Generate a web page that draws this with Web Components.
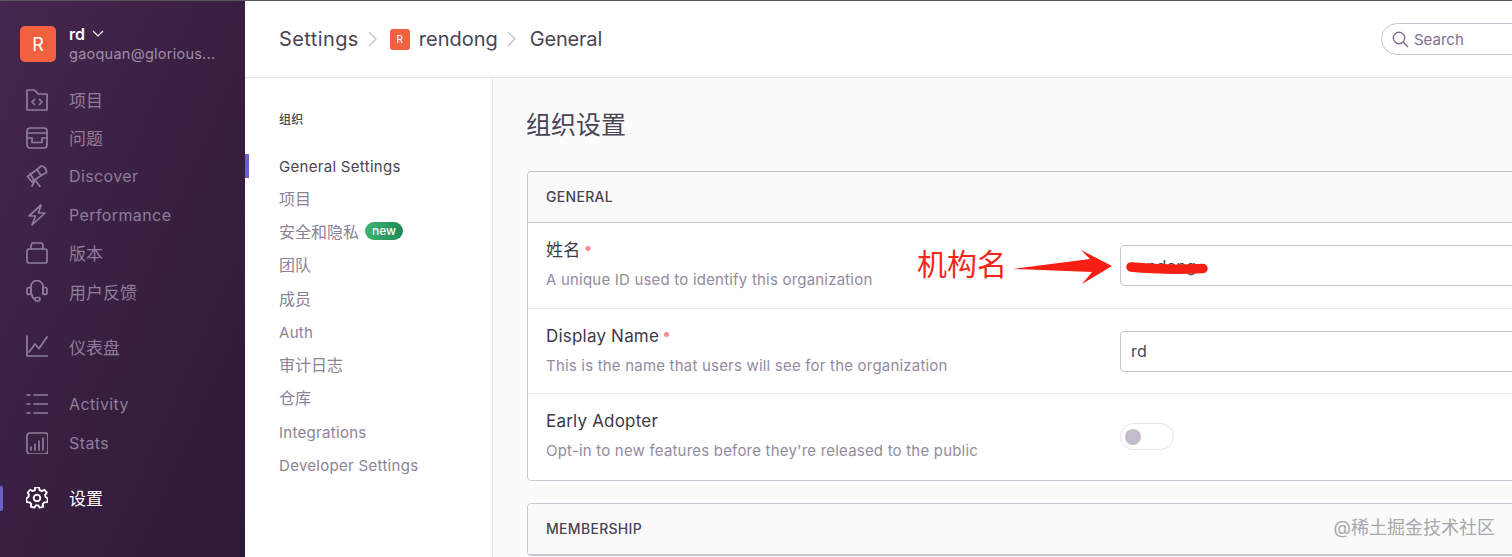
<!DOCTYPE html>
<html lang="zh">
<head>
<meta charset="utf-8">
<title>组织设置</title>
<style>
  html, body { margin: 0; height: 100%; overflow: hidden; background: #fff; }
  body { font-family: Inter, "Noto Sans CJK SC", sans-serif; }
</style>
</head>
<body>
<app-shell>
  <side-bar slot="side">
    <nav-item label="项目" icon="projects"></nav-item>
    <nav-item label="问题" icon="issues"></nav-item>
    <nav-item label="Discover" icon="discover"></nav-item>
    <nav-item label="Performance" icon="performance"></nav-item>
    <nav-item label="版本" icon="releases"></nav-item>
    <nav-item label="用户反馈" icon="feedback"></nav-item>
    <nav-gap size="17"></nav-gap>
    <nav-item label="仪表盘" icon="dashboards"></nav-item>
    <nav-gap size="19.500"></nav-gap>
    <nav-item label="Activity" icon="activity"></nav-item>
    <nav-item label="Stats" icon="stats"></nav-item>
    <nav-gap size="17"></nav-gap>
    <nav-item label="设置" icon="settings" active></nav-item>
  </side-bar>
  <top-bar slot="top"></top-bar>
  <settings-nav slot="nav"></settings-nav>
  <main-content slot="main">
    <form-panel title="General">
      <form-field label="姓名" help="A unique ID used to identify this organization" required value="rendong"></form-field>
      <form-field label="Display Name" help="This is the name that users will see for the organization" required value="rd"></form-field>
      <form-field label="Early Adopter" help="Opt-in to new features before they're released to the public" toggle></form-field>
    </form-panel>
    <form-panel title="Membership"></form-panel>
  </main-content>
  <red-note slot="over"></red-note>
</app-shell>

<script>
// Icones de la barra lateral, tots dibuixats en una caixa de 22x22
const ICONS = {
  projects: '<path d="M1 21V1h7.500l3.500 4h9v16z"/><path d="M8.500 10.500 6 13l2.500 2.500M13.500 10.500 16 13l-2.500 2.500"/>',
  issues: '<rect x="1" y="1" width="20" height="20" rx="3"/><path d="M1 6h20M1 11h5v4.500h10V11h5"/>',
  discover: '<path d="m1.500 11.500 9.500-7 4 6-9 6.500z"/><path d="m11 4.500 4-3.500c3.500 0 6 3.500 5.500 6.500l-5.500 3"/><path d="m9.500 15.500 4.500 6M8.500 16 6 21"/><path d="M4 8.500l3.500 6"/>',
  performance: '<path d="M15 1 3 12h6.500L6 21l13-12h-6.500z"/>',
  releases: '<path d="M5 7V3.500L6 1h10l1 2.500V7"/><rect x="1" y="7" width="20" height="14" rx="2"/>',
  feedback: '<path d="M5 14V6.500a6 6 0 0 1 12 0V14"/><rect x="1" y="7.500" width="4" height="7" rx="2"/><rect x="17" y="7.500" width="4" height="7" rx="2"/><path d="M6 14.500c0 3 1 4 3 4.500"/><rect x="9" y="17.500" width="5" height="3.500" rx="1.500"/>',
  dashboards: '<path d="M1 1v20h21"/><path d="m3 17 6-8 4 4.500L21 2"/>',
  activity: '<path d="M1 2h3M8 2h14M1 11h3M8 11h14M1 20h3M8 20h14"/>',
  stats: '<rect x="1" y="1" width="21" height="21" rx="3"/><path d="M5 18v-3M9 18v-6M13 18V9M17 18V6"/>',
  settings: '<path d="M9 1h4l.6 2.800 2.200 1 2.500-1.400 2.500 3-1.700 2.300.5 2.300L22 12.500l-.9 3.800-2.900.2-1.500 1.800.5 2.800-3.600 1-1.400-2.500h-2.400l-1.400 2.500-3.600-1 .5-2.800-1.500-1.800-2.900-.2-.9-3.800 2.400-1.500.5-2.300L1.700 6.400l2.500-3 2.500 1.400 2.200-1z" transform="translate(0 -.5) scale(1 .96)"/><circle cx="11" cy="11" r="3.300"/>'
};

const esCjk = t => !/^[\x00-\x7f]+$/.test(t);

class AppShell extends HTMLElement {
  constructor() {
    super();
    this.attachShadow({ mode: 'open' });
    this.shadowRoot.innerHTML = `
      <style>
        :host { display: grid; grid-template-columns: 245px 1fr; width: 1512px; height: 557px; overflow: hidden; position: relative; }
        .right { display: grid; grid-template-columns: 248px 1fr; grid-template-rows: 78px 1fr; min-width: 0; min-height: 0; }
        .right ::slotted([slot=top]) { grid-column: 1 / 3; }
      </style>
      <slot name="side"></slot>
      <div class="right">
        <slot name="top"></slot>
        <slot name="nav"></slot>
        <slot name="main"></slot>
      </div>
      <slot name="over"></slot>
    `;
  }
}

class SideBar extends HTMLElement {
  constructor() {
    super();
    this.attachShadow({ mode: 'open' });
    this.shadowRoot.innerHTML = `
      <style>
        :host { display: block; height: 557px; color: #fff; overflow: hidden;
          background: linear-gradient(294deg, #2e1936 0%, #3a2042 55%, #46274f 100%); border-top: 1px solid #5b5560; box-sizing: border-box; }
        .org { display: flex; gap: 13px; padding: 25px 0 0 20px; height: 54.500px; box-sizing: content-box; }
        .logo { width: 36px; height: 36px; border-radius: 5px; background: #f2613f; font-size: 18px; display: flex; align-items: center; justify-content: center; }
        .name { font-size: 16px; font-weight: 600; line-height: 18px; margin-top: -1px; display: flex; align-items: center; gap: 7px; }
        .mail { font-size: 14.500px; color: #9f8eaa; line-height: 20px; margin-top: 1px; letter-spacing: .25px; white-space: nowrap; }
        .list { display: flex; flex-direction: column; }
      </style>
      <div class="org">
        <div class="logo">R</div>
        <div>
          <div class="name">rd <svg width="12" height="8" viewBox="0 0 12 8" fill="none" stroke="#fff" stroke-width="1.200"><path d="m1 1 5 5 5-5"/></svg></div>
          <div class="mail">gaoquan@glorious...</div>
        </div>
      </div>
      <div class="list"><slot></slot></div>
    `;
  }
}

class NavItem extends HTMLElement {
  connectedCallback() {
    if (this.shadowRoot) return;
    this.attachShadow({ mode: 'open' });
    const activo = this.hasAttribute('active');
    const label = this.getAttribute('label');
    this.shadowRoot.innerHTML = `
      <style>
        :host { display: flex; align-items: center; height: 38.300px; padding-left: 26px; position: relative; color: ${activo ? '#fff' : '#8f7d9c'}; font-size: ${esCjk(label) ? '17px' : '16px'}; letter-spacing: ${esCjk(label) ? '0' : '.4px'}; }
        svg { width: 22px; height: 22px; flex: none; margin-right: 21px; fill: none; stroke: currentColor; stroke-width: ${activo ? '1.900' : '1.700'}; stroke-linejoin: round; stroke-linecap: round; }
        .bar { position: absolute; left: 0; top: 7px; width: 3px; height: 25px; border-radius: 0 2px 2px 0; background: #6c5fc7; }
      </style>
      ${activo ? '<span class="bar"></span>' : ''}
      <svg viewBox="0 0 22 22">${ICONS[this.getAttribute('icon')]}</svg>
      <span>${label}</span>
    `;
  }
}

class NavGap extends HTMLElement {
  connectedCallback() {
    this.style.display = 'block';
    this.style.height = this.getAttribute('size') + 'px';
  }
}

class TopBar extends HTMLElement {
  constructor() {
    super();
    this.attachShadow({ mode: 'open' });
    const flecha = '<svg class="sep" width="9" height="16" viewBox="0 0 9 16" fill="none" stroke="#c4bdcc" stroke-width="1.300"><path d="m1 1 7 7-7 7"/></svg>';
    this.shadowRoot.innerHTML = `
      <style>
        :host { display: flex; align-items: center; height: 78px; box-sizing: border-box; padding: 0 0 0 34px; background: #fff;
          border-top: 1px solid #5b5560; border-bottom: 1px solid #e7e5ea; color: #4a4454; font-size: 20px; white-space: nowrap; position: relative; }
        .sep { margin: 0 13px 0 9px; }
        .set { letter-spacing: .4px; }
        .gen { letter-spacing: -.2px; margin-left: 1px; }
        .mini { width: 20px; height: 21px; border-radius: 3px; background: #f2613f; color: #fff; font-size: 10px; display: flex; align-items: center; justify-content: center; margin-right: 9px; }
        .search { position: absolute; left: 1136px; top: 22px; width: 300px; height: 32px; box-sizing: border-box; border: 1px solid #c9c4cf; border-radius: 16px; display: flex; align-items: center; padding-left: 10px; gap: 5px; color: #80708f; font-size: 15px; }
      </style>
      <span class="set">Settings</span>${flecha}<span class="mini">R</span><span>rendong</span>${flecha}<span class="gen">General</span>
      <div class="search">
        <svg width="17" height="17" viewBox="0 0 17 17" fill="none" stroke="#80708f" stroke-width="1.400"><circle cx="7" cy="7" r="5.700"/><path d="m11 11 5 5"/></svg>
        <span>Search</span>
      </div>
    `;
  }
}

class SettingsNav extends HTMLElement {
  constructor() {
    super();
    this.attachShadow({ mode: 'open' });
    const items = ['项目', '安全和隐私', '团队', '成员', 'Auth', '审计日志', '仓库', 'Integrations', 'Developer Settings'];
    this.shadowRoot.innerHTML = `
      <style>
        :host { display: block; box-sizing: border-box; background: #fff; border-right: 1px solid #e7e5ea; padding-top: 33px; font-size: 15px; letter-spacing: .3px; color: #8d8297; height: 479px; }
        h4 { margin: 0 0 21px 34px; font-size: 12px; font-weight: 500; color: #4a4454; line-height: 18px; }
        .it { display: flex; align-items: center; gap: 6px; height: 33.250px; box-sizing: border-box; padding-left: 34px; position: relative; }
        .zh { font-size: 16px; letter-spacing: 0; padding-bottom: 4px; }
        .on { color: #4a4454; }
        .on::before { content: ""; position: absolute; left: 0; top: 4px; width: 4px; height: 24px; background: #6c5fc7; }
        .new { font-size: 12px; font-weight: 500; letter-spacing: 0; color: #fff; line-height: 18px; padding: 0 7px; border-radius: 9px; background: linear-gradient(90deg, #3db56f, #1f8a58); }
      </style>
      <h4>组织</h4>
      <div class="it on">General Settings</div>
      ${items.map(t => `<div class="it ${esCjk(t) ? 'zh' : ''}">${t}${t === '安全和隐私' ? '<span class="new">new</span>' : ''}</div>`).join('')}
    `;
  }
}

class MainContent extends HTMLElement {
  constructor() {
    super();
    this.attachShadow({ mode: 'open' });
    this.shadowRoot.innerHTML = `
      <style>
        :host { display: block; background: #fbfbfc; padding: 0 0 0 34px; overflow: hidden; min-width: 0; }
        h1 { margin: 0 0 0 -1px; padding-top: 28px; height: 65px; font-size: 25px; font-weight: 400; line-height: 38px; color: #4a4454; }
        .panels { width: 1100px; display: flex; flex-direction: column; gap: 22px; }
      </style>
      <h1>组织设置</h1>
      <div class="panels"><slot></slot></div>
    `;
  }
}

class FormPanel extends HTMLElement {
  connectedCallback() {
    if (this.shadowRoot) return;
    this.attachShadow({ mode: 'open' });
    this.shadowRoot.innerHTML = `
      <style>
        :host { display: block; background: #fff; border: 1px solid #c9c4cf; border-radius: 4px; }
        header { height: 48px; padding: 0 0 2px 18px; display: flex; align-items: center; background: #fafafb; border-bottom: 1px solid #c9c4cf; border-radius: 4px 4px 0 0; font-size: 14px; font-weight: 500; letter-spacing: .3px; color: #4a4454; text-transform: uppercase; }
      </style>
      <header>${this.getAttribute('title')}</header>
      <slot></slot>
    `;
  }
}

class FormField extends HTMLElement {
  connectedCallback() {
    if (this.shadowRoot) return;
    this.attachShadow({ mode: 'open' });
    const control = this.hasAttribute('toggle')
      ? '<div class="toggle"><i></i></div>'
      : `<div class="input">${this.getAttribute('value')}</div>`;
    this.shadowRoot.innerHTML = `
      <style>
        :host { display: flex; height: 85.500px; box-sizing: border-box; border-bottom: 1px solid #e7e5ea; padding-left: 18px; }
        :host(:last-child) { border-bottom: 0; height: 86px; }
        .info { width: 574px; flex: none; padding-top: 16px; }
        .lbl { font-size: 17px; letter-spacing: .2px; color: #3e3848; line-height: 22px; height: 22px; }
        .req { color: #f58c97; font-size: 16px; margin-left: 3px; position: relative; top: -3px; line-height: 0; }
        .help { font-size: 15px; letter-spacing: .2px; color: #958a9f; line-height: 20px; margin-top: 9px; }
        .ctl { padding-top: 22px; flex: 1; }
        .input { width: 480px; height: 41px; box-sizing: border-box; border: 1px solid #c9c4cf; border-radius: 4px; padding-left: 10px; display: flex; align-items: center; font-size: 16px; letter-spacing: .3px; color: #4a4454; background: #fff; }
        .toggle { width: 54px; height: 27px; margin-top: 7px; box-sizing: border-box; border: 1px solid #e4e1e8; border-radius: 14px; display: flex; align-items: center; padding-left: 4px; }
        .toggle i { width: 16px; height: 16px; border-radius: 50%; background: #c2bccb; }
      </style>
      <div class="info">
        <div class="lbl">${this.getAttribute('label')}${this.hasAttribute('required') ? '<span class="req">•</span>' : ''}</div>
        <div class="help">${this.getAttribute('help')}</div>
      </div>
      <div class="ctl">${control}</div>
    `;
  }
}

// Anotacions vermelles i marca d'aigua, per sobre de la pagina
class RedNote extends HTMLElement {
  constructor() {
    super();
    this.attachShadow({ mode: 'open' });
    this.shadowRoot.innerHTML = `
      <style>
        :host { display: block; position: absolute; inset: 0; pointer-events: none; }
        .txt { position: absolute; left: 917px; top: 243px; font-size: 30px; line-height: 42px; color: #f3271c; }
        svg { position: absolute; left: 1010px; top: 245px; }
        .mark { position: absolute; right: 17px; top: 516px; font-size: 18px; line-height: 24px; color: #a9a6ac; }
      </style>
      <span class="txt">机构名</span>
      <svg width="200" height="45" viewBox="0 0 200 45">
        <path d="M3 24 80 14 71 5 102 21 72 39 82 27z" fill="#f61f13"/>
        <path d="M121 22c25 2.500 50 2.500 72 1.500" fill="none" stroke="#f61f13" stroke-width="9.500" stroke-linecap="round"/>
      </svg>
      <span class="mark">@稀土掘金技术社区</span>
    `;
  }
}

customElements.define('app-shell', AppShell);
customElements.define('side-bar', SideBar);
customElements.define('nav-item', NavItem);
customElements.define('nav-gap', NavGap);
customElements.define('top-bar', TopBar);
customElements.define('settings-nav', SettingsNav);
customElements.define('main-content', MainContent);
customElements.define('form-panel', FormPanel);
customElements.define('form-field', FormField);
customElements.define('red-note', RedNote);
</script>
</body>
</html>
